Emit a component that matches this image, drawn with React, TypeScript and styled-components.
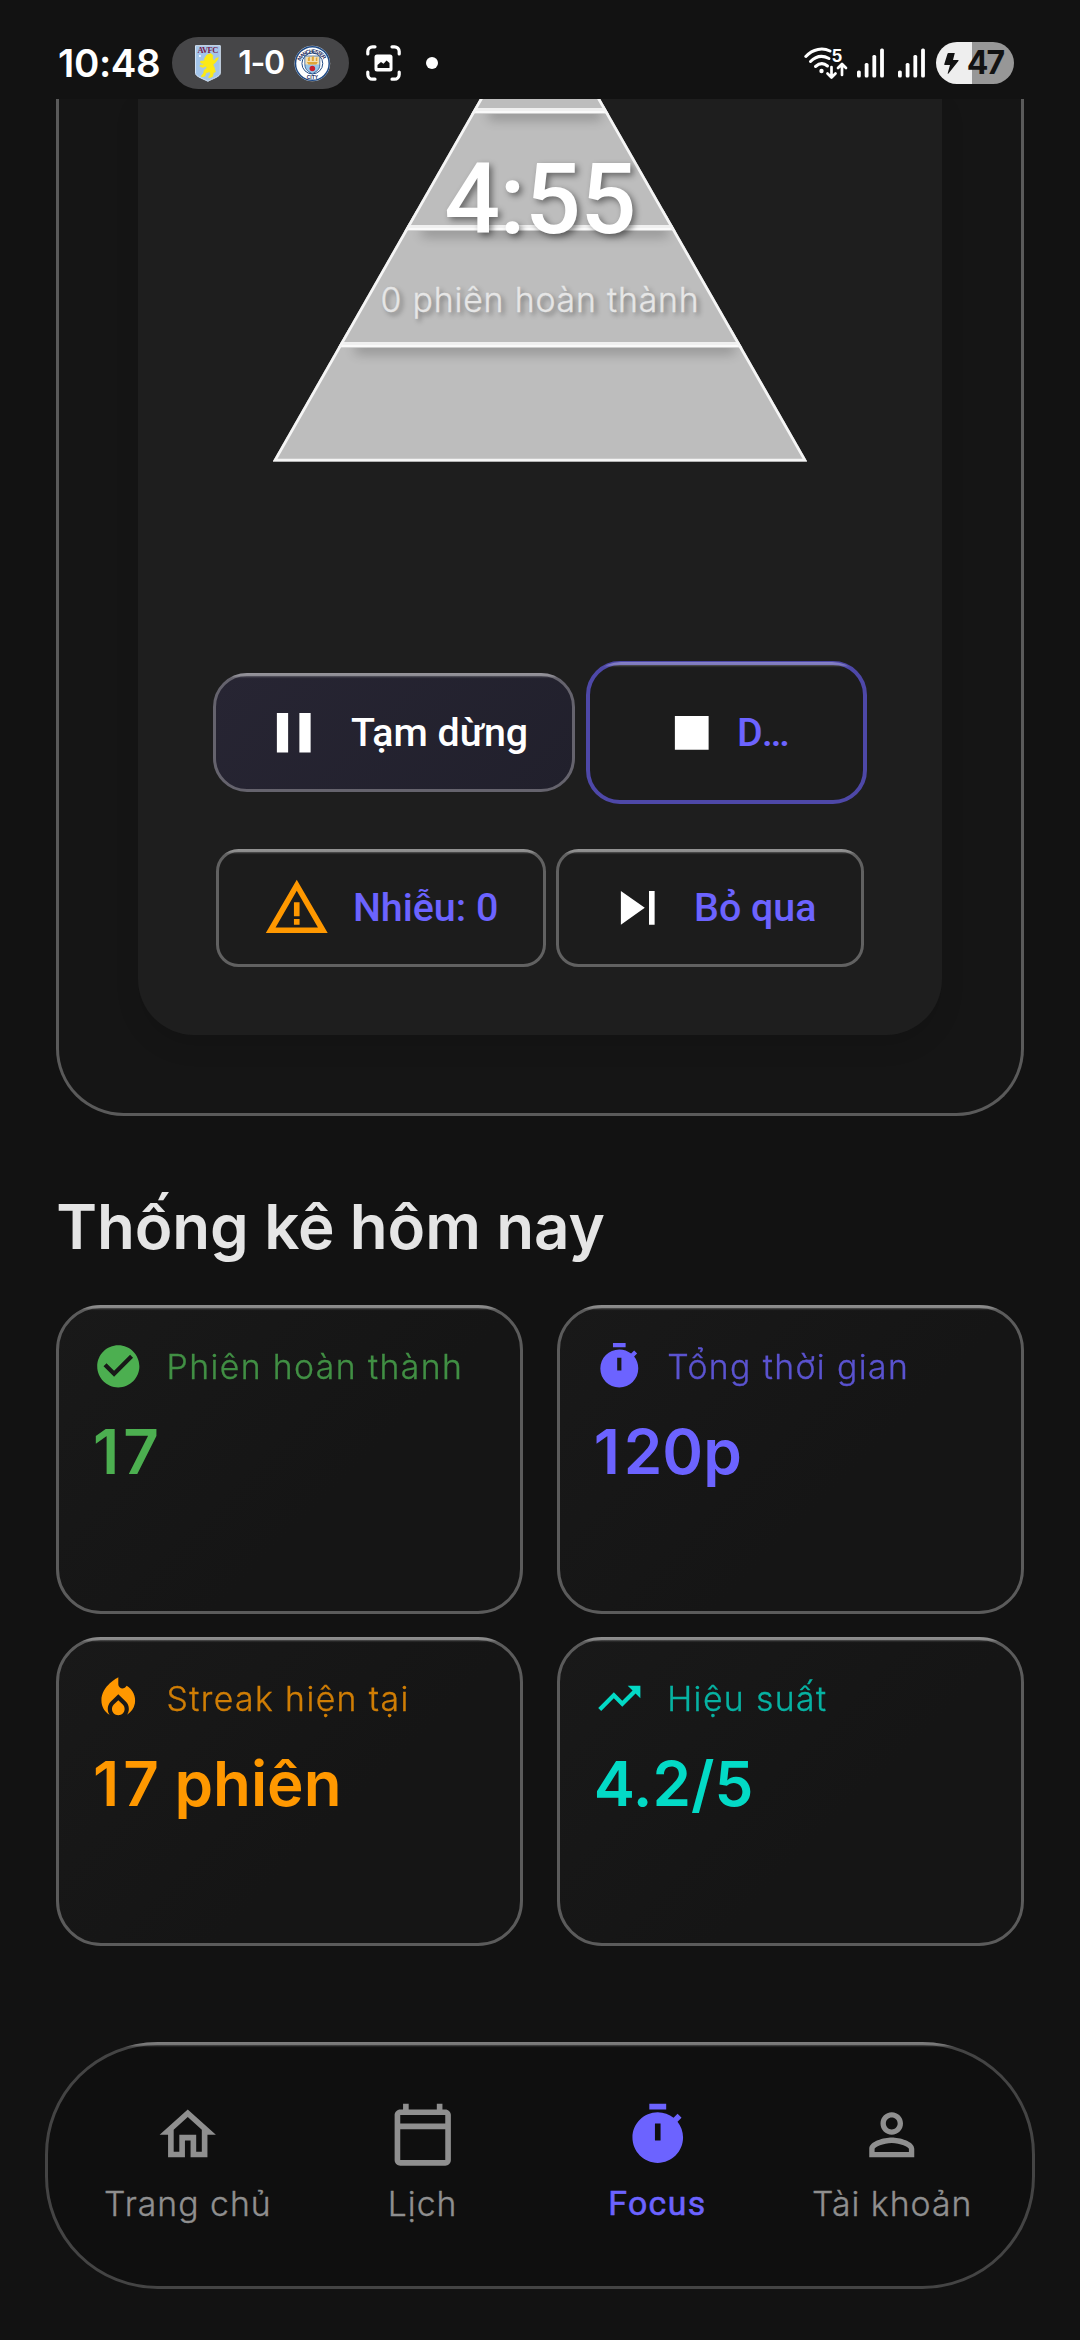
import React from "react";
import styled, { createGlobalStyle, css } from "styled-components";

const GlobalStyle = createGlobalStyle`
  * { box-sizing: border-box; }
  html, body { margin: 0; padding: 0; background: #121212; }
  body { font-family: Inter, Roboto, "Noto Sans", sans-serif; }
`;

const mediumFont = `Roboto, "Noto Sans", sans-serif`;

const colors = {
  violet: "#6c63ff",
  green: "#4caf50",
  orange: "#ff9800",
  teal: "#03dac6",
  muted: "#8f8f8f",
};

/* Light edge along the top of every glass surface */
const glassEdge = css`
  position: relative;
  &::before {
    content: "";
    position: absolute;
    inset: -3px;
    border-radius: inherit;
    pointer-events: none;
    background: linear-gradient(
      180deg,
      rgba(255, 255, 255, 0.32) 0,
      rgba(255, 255, 255, 0.26) 3px,
      rgba(255, 255, 255, 0.12) 4px,
      rgba(255, 255, 255, 0.02) 5px,
      transparent 6px
    );
  }
`;

const Screen = styled.div`
  width: 1080px;
  height: 2340px;
  overflow: hidden;
  display: flex;
  flex-direction: column;
  background: #121212;
`;

/* ---------- status bar ---------- */

const StatusBar = styled.header`
  flex: none;
  height: 99px;
  padding: 27px 66px 0 58px;
  display: flex;
  justify-content: space-between;
`;

const StatusGroup = styled.div`
  height: 72px;
  display: flex;
  align-items: center;
`;

const Clock = styled.span`
  width: 114px;
  font-size: 38.5px;
  font-weight: 600;
  line-height: 48px;
  letter-spacing: -0.4px;
  color: #fff;
`;

const ScorePill = styled.div`
  width: 177px;
  height: 52px;
  margin-right: 17px;
  padding: 0 18px 0 23px;
  border-radius: 26px;
  background: #464648;
  display: flex;
  align-items: center;
`;

const Score = styled.span`
  width: 74px;
  padding-left: 17.5px;
  font-size: 32px;
  font-weight: 600;
  line-height: 40px;
  letter-spacing: -1.4px;
  white-space: nowrap;
  color: #fff;
`;

const Dot = styled.span`
  width: 12px;
  height: 12px;
  margin-left: 25px;
  border-radius: 50%;
  background: #fff;
`;

const SignalSlot = styled.div<{ $gap: number }>`
  display: flex;
  margin-left: ${(p) => p.$gap}px;
`;

const Battery = styled.div`
  width: 78px;
  height: 42px;
  margin-left: 11px;
  padding: 0 11px 0 8px;
  border-radius: 21px;
  background: linear-gradient(90deg, #eeeeee 36px, #979797 36px);
  display: flex;
  align-items: center;
  justify-content: space-between;
`;

const BatteryLevel = styled.span`
  font-size: 32px;
  font-weight: 700;
  line-height: 42px;
  letter-spacing: -2px;
  color: #121212;
`;

/* ---------- timer ---------- */

const Content = styled.main`
  flex: none;
  height: 1943px;
  padding: 0 56.25px;
  display: flex;
  flex-direction: column;
`;

const TimerCard = styled.section`
  flex: none;
  height: 1017px;
  padding: 0 78.75px;
  border: 3px solid #5a5a5a;
  border-top: 0;
  border-radius: 0 0 67.5px 67.5px;
  background: #151515;
`;

const TimerPanel = styled.div`
  height: 936px;
  border-radius: 0 0 56px 56px;
  background: #1e1e1e;
  box-shadow: 0 11px 24px rgba(0, 0, 0, 0.1);
  clip-path: inset(0 -40px -50px -40px);
  display: flex;
  flex-direction: column;
  align-items: center;
`;

const PyramidStage = styled.div`
  width: 536px;
  height: 364px;
  display: grid;
  > * {
    grid-area: 1 / 1;
  }
`;

const Readout = styled.div`
  display: flex;
  flex-direction: column;
  align-items: center;
  padding-top: 41px;
`;

const TimeLeft = styled.div`
  font-family: ${mediumFont};
  font-size: 98.4px;
  font-weight: 500;
  line-height: 120px;
  letter-spacing: -0.5px;
  color: #fff;
  text-shadow: 3px 3px 6px rgba(0, 0, 0, 0.45);
`;

const SessionCount = styled.div`
  margin-top: 20px;
  font-size: 33.75px;
  font-weight: 300;
  line-height: 40px;
  letter-spacing: 0.85px;
  color: #e6e6e6;
  -webkit-text-stroke: 0.35px currentColor;
  text-shadow: 3px 3px 5px rgba(0, 0, 0, 0.4);
`;

const Actions = styled.div<{ $top: number; $gap: number }>`
  margin-top: ${(p) => p.$top}px;
  display: flex;
  align-items: center;
  gap: ${(p) => p.$gap}px;
`;

type Tone = "filled" | "accent" | "plain";

const toneStyles = {
  filled: css`
    height: 118.5px;
    border: 3px solid #65636d;
    border-radius: 34px;
    background: linear-gradient(135deg, #272533, #21202c);
    color: #fff;
  `,
  accent: css`
    height: 143px;
    border: 4px solid #4e48a8;
    border-radius: 34px;
    background: #1c1c1c;
    color: ${colors.violet};
  `,
  plain: css`
    height: 118.5px;
    border: 3px solid #616161;
    border-radius: 22.5px;
    background: #1c1c1c;
    color: ${colors.violet};
  `,
};

const ActionButton = styled.button<{
  $tone: Tone;
  $width: number;
  $inset: number;
  $gap: number;
  $tracking?: number;
}>`
  width: ${(p) => p.$width}px;
  padding: 0 0 0 ${(p) => p.$inset}px;
  display: flex;
  align-items: center;
  gap: ${(p) => p.$gap}px;
  font-family: ${mediumFont};
  font-size: 39.375px;
  font-weight: 500;
  line-height: 56px;
  letter-spacing: ${(p) => p.$tracking ?? 0}px;
  white-space: nowrap;
  ${(p) => toneStyles[p.$tone]}
  ${glassEdge}
`;

/* ---------- statistics ---------- */

const SectionTitle = styled.h2`
  margin: 71px 0 0;
  font-size: 61.875px;
  font-weight: 600;
  line-height: 79px;
  letter-spacing: -0.1px;
  color: #e5e5e5;
`;

const StatGrid = styled.section`
  margin-top: 38.5px;
  display: grid;
  grid-template-columns: 1fr 1fr;
  gap: 23px 33.75px;
`;

const StatCard = styled.article<{ $color: string }>`
  height: 309px;
  padding: 33.75px;
  border: 3px solid #5b5b5b;
  border-radius: 45px;
  background: linear-gradient(135deg, #191919, #151515 60%);
  color: ${(p) => p.$color};
  ${glassEdge}
`;

const StatHead = styled.div`
  display: flex;
  align-items: center;
  gap: 23px;
  height: 50.6px;
`;

const StatLabel = styled.span`
  padding-top: 1px;
  font-size: 33.75px;
  font-weight: 300;
  line-height: 50px;
  letter-spacing: 1.4px;
  -webkit-text-stroke: 0.35px currentColor;
  opacity: 0.8;
  white-space: nowrap;
`;

const StatValue = styled.div<{ $lead: number }>`
  margin-top: 20px;
  font-size: 61.875px;
  font-weight: 600;
  line-height: 79px;
  &::first-letter {
    letter-spacing: ${(p) => p.$lead}px;
  }
`;

/* ---------- navigation ---------- */

const NavBar = styled.nav`
  flex: none;
  height: 247px;
  margin: 0 45px;
  padding: 0 22.5px;
  border: 3px solid #444;
  border-radius: 112.5px;
  background: #0f0f0f;
  display: grid;
  grid-template-columns: repeat(4, 1fr);
  ${glassEdge}
`;

const NavItem = styled.a<{ $active?: boolean }>`
  display: flex;
  flex-direction: column;
  align-items: center;
  padding-top: 55.5px;
  gap: 12px;
  color: ${(p) => (p.$active ? colors.violet : colors.muted)};
  font-family: ${(p) => (p.$active ? mediumFont : "inherit")};
  font-size: 33.75px;
  font-weight: ${(p) => (p.$active ? 400 : 300)};
  line-height: 48px;
  letter-spacing: ${(p) => (p.$active ? 1.4 : 1)}px;
  -webkit-text-stroke: ${(p) => (p.$active ? 0.6 : 0.35)}px currentColor;
`;

/* ---------- icons ---------- */

const Glyph = styled.svg<{ $size: number; $color?: string }>`
  flex: none;
  display: block;
  width: ${(p) => p.$size}px;
  height: ${(p) => p.$size}px;
  fill: ${(p) => p.$color ?? "currentColor"};
`;

const paths = {
  pause: "M6 19h4V5H6v14zm8-14v14h4V5h-4z",
  stop: "M6 6h12v12H6z",
  warning: "M12 5.99L19.53 19H4.47L12 5.99M12 2L1 21h22L12 2zm1 14h-2v2h2v-2zm0-6h-2v5h2v-5z",
  skip: "M6 18l8.5-6L6 6v12zM16 6v12h2V6h-2z",
  check: "M12 2C6.48 2 2 6.48 2 12s4.48 10 10 10 10-4.48 10-10S17.52 2 12 2zm-2 15l-5-5 1.41-1.41L10 14.17l7.59-7.59L19 8l-9 9z",
  timer:
    "M15 1H9v2h6V1zm4.03 6.39l1.42-1.42c-.43-.51-.9-.99-1.41-1.41l-1.42 1.42C16.07 4.74 14.12 4 12 4c-4.97 0-9 4.03-9 9s4.02 9 9 9 9-4.03 9-9c0-2.12-.74-4.07-1.97-5.61zM13 14h-2V8h2v6z",
  flame:
    "M12 12.9l-2.13 2.09C9.31 15.55 9 16.28 9 17.06 9 18.68 10.35 20 12 20s3-1.32 3-2.94c0-.78-.31-1.52-.87-2.07L12 12.9z M16 6l-.44.55C14.38 8.02 12 7.19 12 5.3V2S4 6 4 13c0 2.92 1.56 5.47 3.89 6.86-.56-.79-.89-1.76-.89-2.8 0-1.32.52-2.56 1.47-3.5L12 10.1l3.53 3.47c.95.93 1.47 2.17 1.47 3.5 0 1.02-.31 1.96-.85 2.75 1.89-1.15 3.29-3.06 3.71-5.3.66-3.55-1.07-6.9-3.86-8.52z",
  trend: "M16 6l2.29 2.29-4.88 4.88-4-4L2 16.59 3.41 18l6-6 4 4 6.3-6.29L22 12V6z",
  home: "M12 5.69l5 4.5V18h-2v-6H9v6H7v-7.81l5-4.5M12 3L2 12h3v8h6v-6h2v6h6v-8h3L12 3z",
  calendar:
    "M20 3h-1V1h-2v2H7V1H5v2H4c-1.1 0-2 .9-2 2v16c0 1.1.9 2 2 2h16c1.1 0 2-.9 2-2V5c0-1.1-.9-2-2-2zm0 18H4V10h16v11zm0-13H4V5h16v3z",
  person:
    "M12 5.9c1.16 0 2.1.94 2.1 2.1s-.94 2.1-2.1 2.1S9.9 9.16 9.9 8s.94-2.1 2.1-2.1m0 9c2.97 0 6.1 1.46 6.1 2.1v1.1H5.9V17c0-.64 3.13-2.1 6.1-2.1M12 4C9.79 4 8 5.79 8 8s1.79 4 4 4 4-1.79 4-4-1.79-4-4-4zm0 9c-2.67 0-8 1.34-8 4v3h16v-3c0-2.66-5.33-4-8-4z",
};

function Icon({ name, size, color }: { name: keyof typeof paths; size: number; color?: string }) {
  return (
    <Glyph viewBox="0 0 24 24" $size={size} $color={color} aria-hidden="true">
      <path d={paths[name]} fillRule="evenodd" />
    </Glyph>
  );
}

function VillaCrest() {
  return (
    <svg width="26" height="37" viewBox="0 0 26 37">
      <path d="M.5.5h25v28c0 3-8 5.5-12.500 8C8.500 34 .5 31.500 .5 28.500z" fill="#a3c5ea" stroke="#d6e4f4" />
      <text x="13" y="8" textAnchor="middle" fontFamily="Liberation Serif, serif" fontWeight="700" fontSize="8.500" textLength="21" fill="#7a1e4b">
        AVFC
      </text>
      <circle cx="5" cy="11" r="1" fill="#fff" />
      <path
        d="M12 10l4-1.500 2 2-.5 3.500 2.500 2 1-2.500 2.500-.8-1.300 2.600L20 18l-2 1.500 1.500 3.500 1 4-2 .5-.8 4-3.700 1.500 0-1.500 1.700-1.500-.7-3.500-4 1.500-1 3-3.500 1 .5-1.800 1.500-1.200 1-4 2.500-2-.5-2-3.500 1.500-3-1.200 .5-1.300 2.500.2 1.500-1.500-3.500-.7-.5-1.700 4.500-.5-.5-2z"
        fill="#fdea14"
        stroke="#fdea14"
        strokeWidth=".8"
      />
    </svg>
  );
}

function CityCrest() {
  return (
    <svg width="37" height="37" viewBox="0 0 37 37">
      <defs>
        <path id="city-top" d="M5.500 21a13 13 0 1 1 26 0" />
      </defs>
      <circle cx="18.500" cy="18.500" r="18" fill="#e8eef5" />
      <circle cx="18.500" cy="18.500" r="17" fill="#fff" stroke="#1f4a85" strokeWidth="1.500" />
      <circle cx="18.500" cy="18.500" r="10.500" fill="#fff" stroke="#1f4a85" strokeWidth="1" />
      <text fontFamily="Liberation Sans, sans-serif" fontWeight="700" fontSize="5.500" fill="#1c2c5b">
        <textPath href="#city-top" startOffset="12%" textLength="29">MANCHESTER</textPath>
      </text>
      <text x="18.500" y="34" textAnchor="middle" fontFamily="Liberation Sans, sans-serif" fontWeight="700" fontSize="5" fill="#1c2c5b">
        CITY
      </text>
      <path d="M11 11h15v9c0 5-4 7-7.500 9-3.500-2-7.500-4-7.500-9z" fill="#98c5e9" stroke="#1f4a85" strokeWidth=".8" />
      <path d="M11.500 11.500h14v8h-14z" fill="#f3dfb0" />
      <path d="M13 17h11l-1.500 2.500h-8zM14 13l2-1.500V16h-2zM18 12l2-1V16h-2zM22 13l1.500-1V16H22z" fill="#e0a638" />
      <circle cx="18.500" cy="23.500" r="2.800" fill="#c8202f" />
    </svg>
  );
}

function CaptureIcon() {
  return (
    <svg width="35" height="36" viewBox="0 0 35 36" fill="none" stroke="#fff" strokeWidth="3.200" strokeLinecap="round">
      <path d="M1.800 9V6.500a4.700 4.700 0 0 1 4.700-4.700H9M26 1.800h2.500a4.700 4.700 0 0 1 4.700 4.700V9M33.200 27v2.500a4.700 4.700 0 0 1-4.700 4.700H26M9 34.200H6.500a4.700 4.700 0 0 1-4.700-4.700V27" />
      <rect x="8.500" y="9.500" width="18" height="17" rx="2.500" fill="#fff" stroke="none" />
      <path d="M11.500 23v-3l3.500-3 2.500 1.800 3-3.300 3 2.500v5z" fill="#121212" stroke="none" />
    </svg>
  );
}

function WifiIcon() {
  return (
    <svg width="44" height="48" viewBox="0 -8 44 48" fill="none" stroke="#fff" strokeLinecap="round">
      <path d="M1.800 9.500C9 1.500 19 .5 26 4" strokeWidth="3" />
      <path d="M6.500 14.500C12 9 18.500 8 25 11.500" strokeWidth="3" />
      <path d="M11.500 19.500c4-3.500 8.500-3.500 12-.5" strokeWidth="3" />
      <circle cx="17.500" cy="24" r="2.200" fill="#fff" stroke="none" />
      <path d="M27.500 20v10M23.500 26.500l4 4 4-4M38 28V17M34 21l4-4 4 4" strokeWidth="2.700" strokeLinejoin="round" />
      <text x="27.500" y="15" fontFamily="Inter, sans-serif" fontWeight="700" fontSize="17" fill="#fff" stroke="none">
        5
      </text>
    </svg>
  );
}

function SignalIcon() {
  return (
    <svg width="27" height="30" viewBox="0 0 27 30" fill="#fff">
      {[22.5, 15, 7, 0.5].map((y, i) => (
        <rect key={y} x={i * 7.7} y={y} width="3.800" height={29.5 - y} rx="1.500" />
      ))}
    </svg>
  );
}

function BoltIcon() {
  return (
    <svg width="15" height="22" viewBox="0 0 15 22" fill="#121212">
      <path d="M4.500 1h6.300L9 8h4.800c.7 0 1 .5.6 1L4.500 21.500c-.5.500-1 .2-.8-.3L6 13H1.200c-.8 0-1.100-.5-.9-1.100L3.500 1.800C3.700 1.200 4 1 4.500 1z" />
    </svg>
  );
}

/* Vertical positions of the level separators inside the pyramid */
const LEVELS = [9, 126, 243];
const halfWidthAt = (y: number) => ((y + 105.5) * 267.2) / 468;

function Pyramid() {
  return (
    <svg width="536" height="364" viewBox="0 0 536 364">
      <defs>
        <clipPath id="pyramid-body">
          <path d="M268 -105.500L535.200 362.500H.8z" />
        </clipPath>
        <filter id="level-blur" x="-10%" y="-200%" width="120%" height="500%">
          <feGaussianBlur stdDeviation="6" />
        </filter>
      </defs>
      <g clipPath="url(#pyramid-body)">
        <rect width="536" height="364" fill="#bdbdbd" />
        {LEVELS.map((y) => {
          const half = halfWidthAt(y);
          return (
            <g key={y}>
              <rect x={268 - half + 14} y={y} width={half * 2 - 18} height="12" fill="#000" opacity=".22" filter="url(#level-blur)" />
              <rect x={268 - half - 6} y={y - 14} width={half * 2 + 12} height="14" fill="#bdbdbd" />
              <rect x={268 - half - 6} y={y} width={half * 2 + 12} height="3" fill="#f0f0f0" />
              <rect x={268 - half - 6} y={y + 3} width={half * 2 + 12} height="2.200" fill="#fafafa" />
              <rect x={268 - half - 6} y={y + 5.2} width={half * 2 + 12} height=".8" fill="#d4d4d4" />
            </g>
          );
        })}
        <path d="M268 -105.500L535.200 362.500H.8z" fill="none" stroke="#f5f5f5" strokeWidth="5.400" />
      </g>
    </svg>
  );
}

const stats = [
  { icon: "check", label: "Phiên hoàn thành", value: "17", color: colors.green, lead: 4 },
  { icon: "timer", label: "Tổng thời gian", value: "120p", color: colors.violet, lead: 4 },
  { icon: "flame", label: "Streak hiện tại", value: "17 phiên", color: colors.orange, lead: 4 },
  { icon: "trend", label: "Hiệu suất", value: "4.2/5", color: colors.teal, lead: 0 },
] as const;

const tabs = [
  { icon: "home", label: "Trang chủ" },
  { icon: "calendar", label: "Lịch" },
  { icon: "timer", label: "Focus", active: true },
  { icon: "person", label: "Tài khoản" },
] as const;

export default function App() {
  return (
    <Screen>
      <GlobalStyle />
      <StatusBar>
        <StatusGroup>
          <Clock>10:48</Clock>
          <ScorePill>
            <VillaCrest />
            <Score>1-0</Score>
            <CityCrest />
          </ScorePill>
          <CaptureIcon />
          <Dot />
        </StatusGroup>
        <StatusGroup>
          <WifiIcon />
          <SignalSlot $gap={9}>
            <SignalIcon />
          </SignalSlot>
          <SignalSlot $gap={14}>
            <SignalIcon />
          </SignalSlot>
          <Battery>
            <BoltIcon />
            <BatteryLevel>47</BatteryLevel>
          </Battery>
        </StatusGroup>
      </StatusBar>

      <Content>
        <TimerCard>
          <TimerPanel>
            <PyramidStage>
              <Pyramid />
              <Readout>
                <TimeLeft>4:55</TimeLeft>
                <SessionCount>0 phiên hoàn thành</SessionCount>
              </Readout>
            </PyramidStage>
            <Actions $top={198} $gap={10.7}>
              <ActionButton $tone="filled" $width={362} $inset={44} $gap={23}>
                <Icon name="pause" size={67.5} />
                Tạm dừng
              </ActionButton>
              <ActionButton $tone="accent" $width={280.5} $inset={67.5} $gap={12} $tracking={1}>
                <Icon name="stop" size={67.5} color="#fff" />
                D…
              </ActionButton>
            </Actions>
            <Actions $top={44.5} $gap={10.2}>
              <ActionButton $tone="plain" $width={330.3} $inset={44.2} $gap={22.5}>
                <Icon name="warning" size={67.5} color={colors.orange} />
                Nhiễu: 0
              </ActionButton>
              <ActionButton $tone="plain" $width={308} $inset={44.8} $gap={22.5}>
                <Icon name="skip" size={67.5} color="#fff" />
                Bỏ qua
              </ActionButton>
            </Actions>
          </TimerPanel>
        </TimerCard>

        <SectionTitle>Thống kê hôm nay</SectionTitle>
        <StatGrid>
          {stats.map((s) => (
            <StatCard key={s.label} $color={s.color}>
              <StatHead>
                <Icon name={s.icon} size={50.6} />
                <StatLabel>{s.label}</StatLabel>
              </StatHead>
              <StatValue $lead={s.lead}>{s.value}</StatValue>
            </StatCard>
          ))}
        </StatGrid>
      </Content>

      <NavBar>
        {tabs.map((t) => (
          <NavItem key={t.label} $active={"active" in t}>
            <Icon name={t.icon} size={67.5} />
            {t.label}
          </NavItem>
        ))}
      </NavBar>
    </Screen>
  );
}
